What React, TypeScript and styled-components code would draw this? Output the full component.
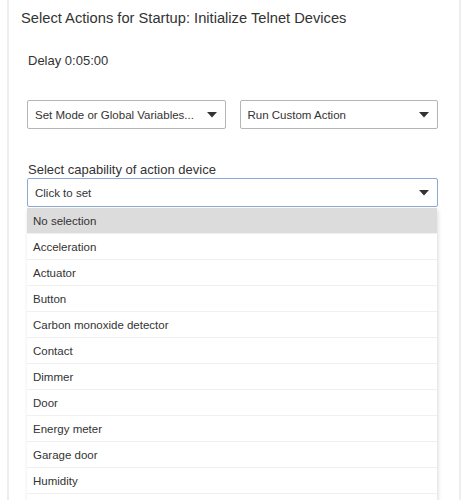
import styled, { createGlobalStyle } from "styled-components"

const GlobalStyle = createGlobalStyle`
	html, body {
		margin: 0;
		padding: 0;
		background: #fff;
		font-family: "Liberation Sans", Arial, sans-serif;
		color: #333;
		overflow: hidden;
	}
`

const capabilities = [
	"No selection",
	"Acceleration",
	"Actuator",
	"Button",
	"Carbon monoxide detector",
	"Contact",
	"Dimmer",
	"Door",
	"Energy meter",
	"Garage door",
	"Humidity",
]

const Caret = () => (
	<svg width="10" height="6" viewBox="0 0 10 6">
		<path d="M0 0 L10 0 L5 5.5 Z" fill="#333" />
	</svg>
)

const App = () => {
	return (
		<>
			<GlobalStyle />
			<Card>
				<Title>Select Actions for Startup: Initialize Telnet Devices</Title>
				<Body>
					<Delay>Delay 0:05:00</Delay>
					<SelectRow>
						<Select>
							<span>Set Mode or Global Variables...</span>
							<Caret />
						</Select>
						<Select>
							<span>Run Custom Action</span>
							<Caret />
						</Select>
					</SelectRow>
					<Label>Select capability of action device</Label>
					<Select $focused>
						<span>Click to set</span>
						<Caret />
					</Select>
					<Menu>
						{capabilities.map((c, i) => (
							<Option key={c} $active={i === 0}>
								{c}
							</Option>
						))}
					</Menu>
				</Body>
			</Card>
		</>
	)
}

export default App

const Card = styled.div`
	margin-left: 7px;
	width: 454px;
	height: 500px;
	overflow: hidden;
	border-left: 2px solid #eee;
	border-right: 2px solid #eee;
	box-sizing: border-box;
	padding: 9px 0 0 12px;
`

const Title = styled.h2`
	margin: 0;
	font-size: 14.7px;
	font-weight: 400;
	line-height: 18px;
	color: #333;
`

const Body = styled.div`
	padding: 0 21px 0 6px;
	display: flex;
	flex-direction: column;
`

const Delay = styled.div`
	margin-top: 26px;
	padding-left: 1px;
	font-size: 13px;
	line-height: 16px;
`

const SelectRow = styled.div`
	display: grid;
	grid-template-columns: 1fr 1fr;
	gap: 14px;
	margin-top: 31px;
`

const Select = styled.div<{ $focused?: boolean }>`
	height: 29px;
	box-sizing: border-box;
	border: 1px solid ${(p) => (p.$focused ? "#8ea8d6" : "#b5b5b5")};
	border-radius: 2px;
	background: #fff;
	display: flex;
	align-items: center;
	justify-content: space-between;
	padding: 0 8px 0 7px;
	font-size: 11.5px;
	color: #333;

	svg {
		flex-shrink: 0;
	}
`

const Label = styled.div`
	margin-top: 33px;
	padding-left: 1px;
	font-size: 13px;
	line-height: 15px;
	margin-bottom: 1px;
`

const Menu = styled.div`
	margin-top: 1px;
	margin-right: 1px;
	padding-bottom: 30px;
	background: #fff;
	box-shadow: 1px 2px 4px rgba(0, 0, 0, 0.15);
`

const Option = styled.div<{ $active?: boolean }>`
	height: 26px;
	box-sizing: border-box;
	padding-left: 6px;
	display: flex;
	align-items: center;
	font-size: 11.5px;
	color: #333;
	background: ${(p) => (p.$active ? "#dcdcdc" : "#fff")};
	border-bottom: 1px solid #f0f0f0;
`
